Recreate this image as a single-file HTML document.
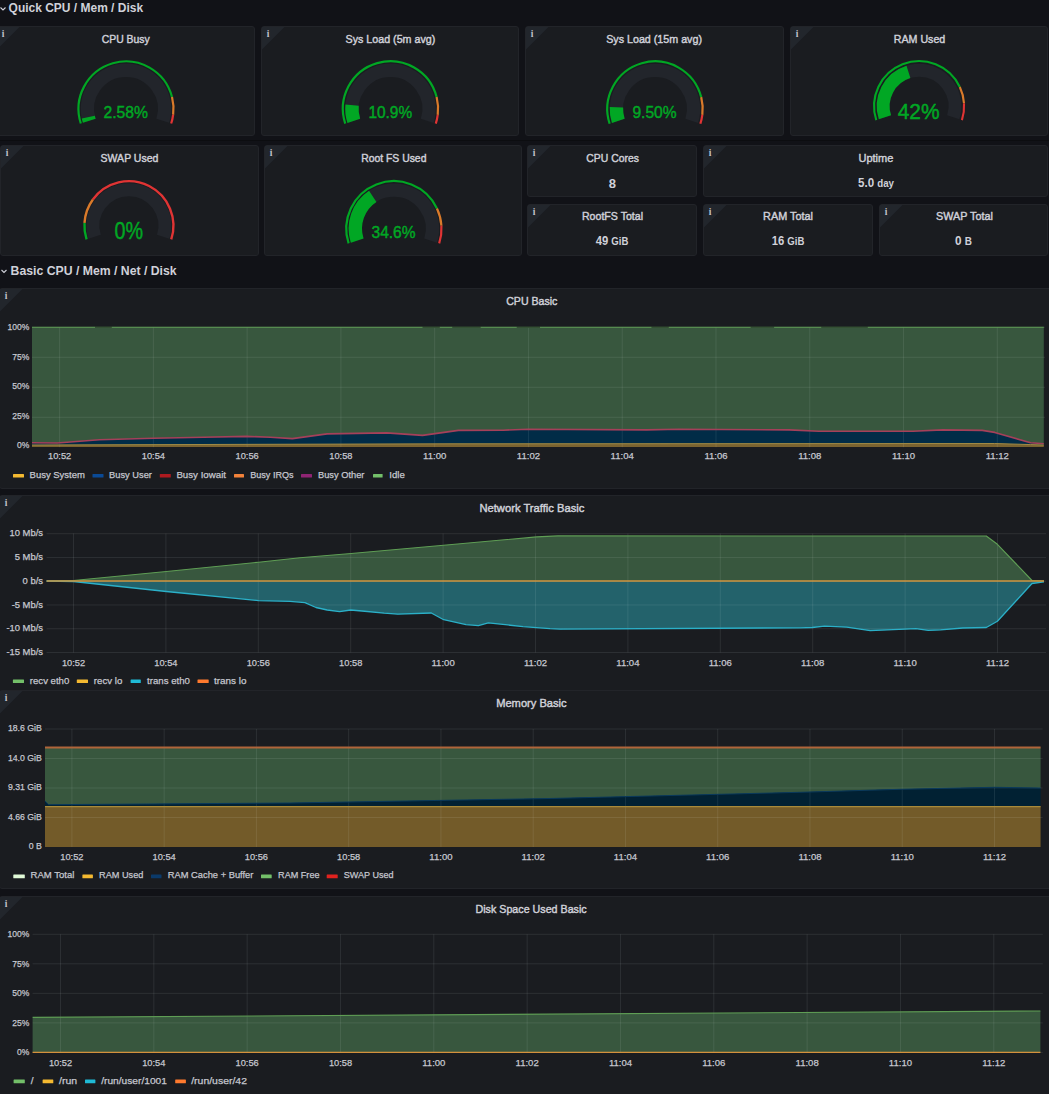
<!DOCTYPE html>
<html><head><meta charset="utf-8"><title>Grafana Node Exporter</title>
<style>html,body{margin:0;padding:0;background:#111217;width:1049px;height:1094px;overflow:hidden;font-family:"Liberation Sans",sans-serif;}svg{display:block}</style>
</head><body>
<svg width="1049" height="1094" viewBox="0 0 1049 1094"><rect x="0" y="0" width="1049" height="1094" fill="#111217"/>
<rect x="0" y="140" width="1049" height="1" fill="#0c0d10"/>
<path d="M0.5,7.5 L3,10 L5.5,7.5" stroke="#d0d1d9" stroke-width="1.1" fill="none"/>
<text x="8.6" y="11.7" font-family="Liberation Sans" font-size="12" fill="#d0d1d9" text-anchor="start" font-weight="bold" textLength="134.5" lengthAdjust="spacingAndGlyphs">Quick CPU / Mem / Disk</text>
<path d="M1.5,270 L4,272.5 L6.5,270" stroke="#d0d1d9" stroke-width="1.1" fill="none"/>
<text x="10.6" y="275" font-family="Liberation Sans" font-size="12" fill="#d0d1d9" text-anchor="start" font-weight="bold" textLength="166" lengthAdjust="spacingAndGlyphs">Basic CPU / Mem / Net / Disk</text>
<rect x="-3.5" y="26.5" width="258" height="109" rx="2.5" fill="#1a1c20" stroke="#222429" stroke-width="1"/>
<path d="M-3,27 L19.5,27 L-3,49.5 Z" fill="#22262c"/>
<text x="3" y="36.6" font-family="Liberation Serif" font-size="9.5" fill="#c2c3cc" text-anchor="middle" font-weight="bold">i</text>
<rect x="261.5" y="26.5" width="257" height="109" rx="2.5" fill="#1a1c20" stroke="#222429" stroke-width="1"/>
<path d="M262,27 L284.5,27 L262,49.5 Z" fill="#22262c"/>
<text x="268" y="36.6" font-family="Liberation Serif" font-size="9.5" fill="#c2c3cc" text-anchor="middle" font-weight="bold">i</text>
<rect x="525.5" y="26.5" width="258" height="109" rx="2.5" fill="#1a1c20" stroke="#222429" stroke-width="1"/>
<path d="M526,27 L548.5,27 L526,49.5 Z" fill="#22262c"/>
<text x="532" y="36.6" font-family="Liberation Serif" font-size="9.5" fill="#c2c3cc" text-anchor="middle" font-weight="bold">i</text>
<rect x="790.5" y="26.5" width="257" height="109" rx="2.5" fill="#1a1c20" stroke="#222429" stroke-width="1"/>
<path d="M791,27 L813.5,27 L791,49.5 Z" fill="#22262c"/>
<text x="797" y="36.6" font-family="Liberation Serif" font-size="9.5" fill="#c2c3cc" text-anchor="middle" font-weight="bold">i</text>
<text x="125.7" y="42.6" font-family="Liberation Sans" font-size="11" fill="#d0d1d9" text-anchor="middle" font-weight="normal" textLength="48" lengthAdjust="spacingAndGlyphs" stroke="#d0d1d9" stroke-width="0.42">CPU Busy</text>
<text x="390.4" y="42.8" font-family="Liberation Sans" font-size="11" fill="#d0d1d9" text-anchor="middle" font-weight="normal" textLength="89.7" lengthAdjust="spacingAndGlyphs" stroke="#d0d1d9" stroke-width="0.42">Sys Load (5m avg)</text>
<text x="654.1" y="42.8" font-family="Liberation Sans" font-size="11" fill="#d0d1d9" text-anchor="middle" font-weight="normal" textLength="95.8" lengthAdjust="spacingAndGlyphs" stroke="#d0d1d9" stroke-width="0.42">Sys Load (15m avg)</text>
<text x="919.5" y="42.6" font-family="Liberation Sans" font-size="11" fill="#d0d1d9" text-anchor="middle" font-weight="normal" textLength="51.5" lengthAdjust="spacingAndGlyphs" stroke="#d0d1d9" stroke-width="0.42">RAM Used</text>
<path d="M89.29,120.73 A38.6,38.6 0 1 1 162.71,120.73" stroke="#22252b" stroke-width="13.4" fill="none"/>
<path d="M89.29,120.73 A38.6,38.6 0 0 1 88.3,117.11" stroke="#01a724" stroke-width="13.4" fill="none"/>
<path d="M80.82,123.48 A47.5,47.5 0 1 1 172.01,96.99" stroke="#01a724" stroke-width="2.2" fill="none"/>
<path d="M172.01,96.99 A47.5,47.5 0 0 1 173.13,114.75" stroke="#d97a2a" stroke-width="2.2" fill="none"/>
<path d="M173.13,114.75 A47.5,47.5 0 0 1 171.18,123.48" stroke="#e03434" stroke-width="2.2" fill="none"/>
<text x="125.75" y="118.4" font-family="Liberation Sans" font-size="16" fill="#01a724" text-anchor="middle" font-weight="normal" textLength="44.5" lengthAdjust="spacingAndGlyphs" stroke="#01a724" stroke-width="0.45">2.58%</text>
<path d="M353.79,120.83 A38.6,38.6 0 1 1 427.21,120.83" stroke="#22252b" stroke-width="13.4" fill="none"/>
<path d="M353.79,120.83 A38.6,38.6 0 0 1 352.08,105.17" stroke="#01a724" stroke-width="13.4" fill="none"/>
<path d="M345.23,123.61 A47.6,47.6 0 1 1 436.6,97.06" stroke="#01a724" stroke-width="2.2" fill="none"/>
<path d="M436.6,97.06 A47.6,47.6 0 0 1 437.72,114.87" stroke="#d97a2a" stroke-width="2.2" fill="none"/>
<path d="M437.72,114.87 A47.6,47.6 0 0 1 435.77,123.61" stroke="#e03434" stroke-width="2.2" fill="none"/>
<text x="390.3" y="118.4" font-family="Liberation Sans" font-size="16.5" fill="#01a724" text-anchor="middle" font-weight="normal" textLength="43.8" lengthAdjust="spacingAndGlyphs" stroke="#01a724" stroke-width="0.45">10.9%</text>
<path d="M618.29,120.93 A38.6,38.6 0 1 1 691.71,120.93" stroke="#22252b" stroke-width="13.4" fill="none"/>
<path d="M618.29,120.93 A38.6,38.6 0 0 1 616.44,107.3" stroke="#01a724" stroke-width="13.4" fill="none"/>
<path d="M609.63,123.74 A47.7,47.7 0 1 1 701.2,97.14" stroke="#01a724" stroke-width="2.2" fill="none"/>
<path d="M701.2,97.14 A47.7,47.7 0 0 1 702.32,114.98" stroke="#d97a2a" stroke-width="2.2" fill="none"/>
<path d="M702.32,114.98 A47.7,47.7 0 0 1 700.37,123.74" stroke="#e03434" stroke-width="2.2" fill="none"/>
<text x="654.5" y="118.4" font-family="Liberation Sans" font-size="16.5" fill="#01a724" text-anchor="middle" font-weight="normal" textLength="44.2" lengthAdjust="spacingAndGlyphs" stroke="#01a724" stroke-width="0.45">9.50%</text>
<path d="M884.96,117.29 A35.9,35.9 0 1 1 953.24,117.29" stroke="#22252b" stroke-width="12.9" fill="none"/>
<path d="M884.96,117.29 A35.9,35.9 0 0 1 908.44,71.92" stroke="#01a724" stroke-width="12.9" fill="none"/>
<path d="M876.3,120.11 A45,45 0 0 1 959.82,87.04" stroke="#01a724" stroke-width="2.1" fill="none"/>
<path d="M959.82,87.04 A45,45 0 0 1 964.01,103.37" stroke="#d97a2a" stroke-width="2.1" fill="none"/>
<path d="M964.01,103.37 A45,45 0 0 1 961.9,120.11" stroke="#e03434" stroke-width="2.1" fill="none"/>
<text x="918.6" y="119.2" font-family="Liberation Sans" font-size="22.3" fill="#01a724" text-anchor="middle" font-weight="normal" textLength="41.8" lengthAdjust="spacingAndGlyphs" stroke="#01a724" stroke-width="0.45">42%</text>
<rect x="0.5" y="145.5" width="258" height="110" rx="2.5" fill="#1a1c20" stroke="#222429" stroke-width="1"/>
<path d="M1,146 L23.5,146 L1,168.5 Z" fill="#22262c"/>
<text x="7" y="155.6" font-family="Liberation Serif" font-size="9.5" fill="#c2c3cc" text-anchor="middle" font-weight="bold">i</text>
<rect x="264.5" y="145.5" width="257" height="110" rx="2.5" fill="#1a1c20" stroke="#222429" stroke-width="1"/>
<path d="M265,146 L287.5,146 L265,168.5 Z" fill="#22262c"/>
<text x="271" y="155.6" font-family="Liberation Serif" font-size="9.5" fill="#c2c3cc" text-anchor="middle" font-weight="bold">i</text>
<rect x="527.5" y="145.5" width="169" height="51" rx="2.5" fill="#1a1c20" stroke="#222429" stroke-width="1"/>
<path d="M528,146 L550.5,146 L528,168.5 Z" fill="#22262c"/>
<text x="534" y="155.6" font-family="Liberation Serif" font-size="9.5" fill="#c2c3cc" text-anchor="middle" font-weight="bold">i</text>
<rect x="703.5" y="145.5" width="344" height="51" rx="2.5" fill="#1a1c20" stroke="#222429" stroke-width="1"/>
<path d="M704,146 L726.5,146 L704,168.5 Z" fill="#22262c"/>
<text x="710" y="155.6" font-family="Liberation Serif" font-size="9.5" fill="#c2c3cc" text-anchor="middle" font-weight="bold">i</text>
<rect x="527.5" y="204.5" width="169" height="51" rx="2.5" fill="#1a1c20" stroke="#222429" stroke-width="1"/>
<path d="M528,205 L550.5,205 L528,227.5 Z" fill="#22262c"/>
<text x="534" y="214.6" font-family="Liberation Serif" font-size="9.5" fill="#c2c3cc" text-anchor="middle" font-weight="bold">i</text>
<rect x="703.5" y="204.5" width="169" height="51" rx="2.5" fill="#1a1c20" stroke="#222429" stroke-width="1"/>
<path d="M704,205 L726.5,205 L704,227.5 Z" fill="#22262c"/>
<text x="710" y="214.6" font-family="Liberation Serif" font-size="9.5" fill="#c2c3cc" text-anchor="middle" font-weight="bold">i</text>
<rect x="879.5" y="204.5" width="168" height="51" rx="2.5" fill="#1a1c20" stroke="#222429" stroke-width="1"/>
<path d="M880,205 L902.5,205 L880,227.5 Z" fill="#22262c"/>
<text x="886" y="214.6" font-family="Liberation Serif" font-size="9.5" fill="#c2c3cc" text-anchor="middle" font-weight="bold">i</text>
<text x="129.5" y="162.1" font-family="Liberation Sans" font-size="11" fill="#d0d1d9" text-anchor="middle" font-weight="normal" textLength="57.8" lengthAdjust="spacingAndGlyphs" stroke="#d0d1d9" stroke-width="0.42">SWAP Used</text>
<text x="393.8" y="162" font-family="Liberation Sans" font-size="11" fill="#d0d1d9" text-anchor="middle" font-weight="normal" textLength="65.3" lengthAdjust="spacingAndGlyphs" stroke="#d0d1d9" stroke-width="0.42">Root FS Used</text>
<path d="M94.66,236.82 A36,36 0 1 1 163.14,236.82" stroke="#22252b" stroke-width="13" fill="none"/>
<path d="M86.58,239.45 A44.5,44.5 0 0 1 84.49,222.91" stroke="#01a724" stroke-width="2.4" fill="none"/>
<path d="M84.49,222.91 A44.5,44.5 0 0 1 92.9,199.54" stroke="#d97a2a" stroke-width="2.4" fill="none"/>
<path d="M92.9,199.54 A44.5,44.5 0 0 1 171.22,239.45" stroke="#e03434" stroke-width="2.4" fill="none"/>
<text x="128.7" y="239" font-family="Liberation Sans" font-size="23" fill="#01a724" text-anchor="middle" font-weight="normal" textLength="28.5" lengthAdjust="spacingAndGlyphs" stroke="#01a724" stroke-width="0.45">0%</text>
<path d="M357.19,240.63 A38.6,38.6 0 1 1 430.61,240.63" stroke="#22252b" stroke-width="13.4" fill="none"/>
<path d="M357.19,240.63 A38.6,38.6 0 0 1 372.73,196.42" stroke="#01a724" stroke-width="13.4" fill="none"/>
<path d="M348.63,243.41 A47.6,47.6 0 0 1 436.97,208.43" stroke="#01a724" stroke-width="2.2" fill="none"/>
<path d="M436.97,208.43 A47.6,47.6 0 0 1 441.41,225.71" stroke="#d97a2a" stroke-width="2.2" fill="none"/>
<path d="M441.41,225.71 A47.6,47.6 0 0 1 439.17,243.41" stroke="#e03434" stroke-width="2.2" fill="none"/>
<text x="393.5" y="237.6" font-family="Liberation Sans" font-size="16" fill="#01a724" text-anchor="middle" font-weight="normal" textLength="44" lengthAdjust="spacingAndGlyphs" stroke="#01a724" stroke-width="0.45">34.6%</text>
<text x="612.6" y="162.2" font-family="Liberation Sans" font-size="11" fill="#d0d1d9" text-anchor="middle" font-weight="normal" textLength="52.5" lengthAdjust="spacingAndGlyphs" stroke="#d0d1d9" stroke-width="0.42">CPU Cores</text>
<text x="875.9" y="162.2" font-family="Liberation Sans" font-size="11" fill="#d0d1d9" text-anchor="middle" font-weight="normal" textLength="34.9" lengthAdjust="spacingAndGlyphs" stroke="#d0d1d9" stroke-width="0.42">Uptime</text>
<text x="612.3" y="187.9" font-family="Liberation Sans" font-size="13" fill="#d0d1d9" text-anchor="middle" font-weight="bold">8</text>
<text x="876" y="187.4" font-family="Liberation Sans" font-size="12.5" fill="#d0d1d9" text-anchor="middle" font-weight="bold" textLength="36" lengthAdjust="spacingAndGlyphs">5.0 <tspan font-size="10.5">day</tspan></text>
<text x="612.5" y="220.2" font-family="Liberation Sans" font-size="11" fill="#d0d1d9" text-anchor="middle" font-weight="normal" textLength="61.1" lengthAdjust="spacingAndGlyphs" stroke="#d0d1d9" stroke-width="0.42">RootFS Total</text>
<text x="788" y="220.3" font-family="Liberation Sans" font-size="11" fill="#d0d1d9" text-anchor="middle" font-weight="normal" textLength="49.9" lengthAdjust="spacingAndGlyphs" stroke="#d0d1d9" stroke-width="0.42">RAM Total</text>
<text x="964.4" y="220.3" font-family="Liberation Sans" font-size="11" fill="#d0d1d9" text-anchor="middle" font-weight="normal" textLength="56.8" lengthAdjust="spacingAndGlyphs" stroke="#d0d1d9" stroke-width="0.42">SWAP Total</text>
<text x="612" y="245.3" font-family="Liberation Sans" font-size="12" fill="#d0d1d9" text-anchor="middle" font-weight="bold" textLength="32.7" lengthAdjust="spacingAndGlyphs">49 <tspan font-size="10.2">GiB</tspan></text>
<text x="788" y="245.3" font-family="Liberation Sans" font-size="12" fill="#d0d1d9" text-anchor="middle" font-weight="bold" textLength="32.7" lengthAdjust="spacingAndGlyphs">16 <tspan font-size="10.2">GiB</tspan></text>
<text x="963.5" y="245.3" font-family="Liberation Sans" font-size="12" fill="#d0d1d9" text-anchor="middle" font-weight="bold" textLength="17" lengthAdjust="spacingAndGlyphs">0 <tspan font-size="10.2">B</tspan></text>
<rect x="-0.5" y="288.5" width="1060" height="200" rx="2.5" fill="#1a1c20" stroke="#222429" stroke-width="1"/>
<path d="M0,289 L22.5,289 L0,311.5 Z" fill="#22262c"/>
<text x="6" y="298.6" font-family="Liberation Serif" font-size="9.5" fill="#c2c3cc" text-anchor="middle" font-weight="bold">i</text>
<rect x="-0.5" y="495.5" width="1060" height="204" rx="2.5" fill="#1a1c20" stroke="#222429" stroke-width="1"/>
<path d="M0,496 L22.5,496 L0,518.5 Z" fill="#22262c"/>
<text x="6" y="505.6" font-family="Liberation Serif" font-size="9.5" fill="#c2c3cc" text-anchor="middle" font-weight="bold">i</text>
<rect x="-0.5" y="690.5" width="1060" height="198" rx="2.5" fill="#1a1c20" stroke="#222429" stroke-width="1"/>
<path d="M0,691 L22.5,691 L0,713.5 Z" fill="#22262c"/>
<text x="6" y="700.6" font-family="Liberation Serif" font-size="9.5" fill="#c2c3cc" text-anchor="middle" font-weight="bold">i</text>
<rect x="-0.5" y="896.5" width="1060" height="213" rx="2.5" fill="#1a1c20" stroke="#222429" stroke-width="1"/>
<path d="M0,897 L22.5,897 L0,919.5 Z" fill="#22262c"/>
<text x="6" y="906.6" font-family="Liberation Serif" font-size="9.5" fill="#c2c3cc" text-anchor="middle" font-weight="bold">i</text>
<text x="531.8" y="305.4" font-family="Liberation Sans" font-size="11" fill="#d0d1d9" text-anchor="middle" font-weight="normal" textLength="51.2" lengthAdjust="spacingAndGlyphs" stroke="#d0d1d9" stroke-width="0.42">CPU Basic</text>
<text x="531.9" y="511.7" font-family="Liberation Sans" font-size="11" fill="#d0d1d9" text-anchor="middle" font-weight="normal" textLength="104.9" lengthAdjust="spacingAndGlyphs" stroke="#d0d1d9" stroke-width="0.42">Network Traffic Basic</text>
<text x="531.4" y="707.3" font-family="Liberation Sans" font-size="11" fill="#d0d1d9" text-anchor="middle" font-weight="normal" textLength="70.4" lengthAdjust="spacingAndGlyphs" stroke="#d0d1d9" stroke-width="0.42">Memory Basic</text>
<text x="531.1" y="912.7" font-family="Liberation Sans" font-size="11" fill="#d0d1d9" text-anchor="middle" font-weight="normal" textLength="111.2" lengthAdjust="spacingAndGlyphs" stroke="#d0d1d9" stroke-width="0.42">Disk Space Used Basic</text>
<text x="29.3" y="330.2" font-family="Liberation Sans" font-size="9.9" fill="#c7c8d0" text-anchor="end" font-weight="normal" textLength="21.77" lengthAdjust="spacingAndGlyphs" stroke="#c7c8d0" stroke-width="0.25">100%</text>
<text x="29.3" y="359.7" font-family="Liberation Sans" font-size="9.9" fill="#c7c8d0" text-anchor="end" font-weight="normal" textLength="17.04" lengthAdjust="spacingAndGlyphs" stroke="#c7c8d0" stroke-width="0.25">75%</text>
<text x="29.3" y="389.2" font-family="Liberation Sans" font-size="9.9" fill="#c7c8d0" text-anchor="end" font-weight="normal" textLength="17.04" lengthAdjust="spacingAndGlyphs" stroke="#c7c8d0" stroke-width="0.25">50%</text>
<text x="29.3" y="418.8" font-family="Liberation Sans" font-size="9.9" fill="#c7c8d0" text-anchor="end" font-weight="normal" textLength="17.04" lengthAdjust="spacingAndGlyphs" stroke="#c7c8d0" stroke-width="0.25">25%</text>
<text x="29.3" y="448.1" font-family="Liberation Sans" font-size="9.9" fill="#c7c8d0" text-anchor="end" font-weight="normal" textLength="12.31" lengthAdjust="spacingAndGlyphs" stroke="#c7c8d0" stroke-width="0.25">0%</text>
<text x="59.6" y="459.2" font-family="Liberation Sans" font-size="9.9" fill="#c7c8d0" text-anchor="middle" font-weight="normal" textLength="23.2" lengthAdjust="spacingAndGlyphs" stroke="#c7c8d0" stroke-width="0.25">10:52</text>
<text x="153.37" y="459.2" font-family="Liberation Sans" font-size="9.9" fill="#c7c8d0" text-anchor="middle" font-weight="normal" textLength="23.2" lengthAdjust="spacingAndGlyphs" stroke="#c7c8d0" stroke-width="0.25">10:54</text>
<text x="247.14" y="459.2" font-family="Liberation Sans" font-size="9.9" fill="#c7c8d0" text-anchor="middle" font-weight="normal" textLength="23.2" lengthAdjust="spacingAndGlyphs" stroke="#c7c8d0" stroke-width="0.25">10:56</text>
<text x="340.91" y="459.2" font-family="Liberation Sans" font-size="9.9" fill="#c7c8d0" text-anchor="middle" font-weight="normal" textLength="23.2" lengthAdjust="spacingAndGlyphs" stroke="#c7c8d0" stroke-width="0.25">10:58</text>
<text x="434.68" y="459.2" font-family="Liberation Sans" font-size="9.9" fill="#c7c8d0" text-anchor="middle" font-weight="normal" textLength="23.2" lengthAdjust="spacingAndGlyphs" stroke="#c7c8d0" stroke-width="0.25">11:00</text>
<text x="528.45" y="459.2" font-family="Liberation Sans" font-size="9.9" fill="#c7c8d0" text-anchor="middle" font-weight="normal" textLength="23.2" lengthAdjust="spacingAndGlyphs" stroke="#c7c8d0" stroke-width="0.25">11:02</text>
<text x="622.22" y="459.2" font-family="Liberation Sans" font-size="9.9" fill="#c7c8d0" text-anchor="middle" font-weight="normal" textLength="23.2" lengthAdjust="spacingAndGlyphs" stroke="#c7c8d0" stroke-width="0.25">11:04</text>
<text x="715.99" y="459.2" font-family="Liberation Sans" font-size="9.9" fill="#c7c8d0" text-anchor="middle" font-weight="normal" textLength="23.2" lengthAdjust="spacingAndGlyphs" stroke="#c7c8d0" stroke-width="0.25">11:06</text>
<text x="809.76" y="459.2" font-family="Liberation Sans" font-size="9.9" fill="#c7c8d0" text-anchor="middle" font-weight="normal" textLength="23.2" lengthAdjust="spacingAndGlyphs" stroke="#c7c8d0" stroke-width="0.25">11:08</text>
<text x="903.53" y="459.2" font-family="Liberation Sans" font-size="9.9" fill="#c7c8d0" text-anchor="middle" font-weight="normal" textLength="23.2" lengthAdjust="spacingAndGlyphs" stroke="#c7c8d0" stroke-width="0.25">11:10</text>
<text x="997.3" y="459.2" font-family="Liberation Sans" font-size="9.9" fill="#c7c8d0" text-anchor="middle" font-weight="normal" textLength="23.2" lengthAdjust="spacingAndGlyphs" stroke="#c7c8d0" stroke-width="0.25">11:12</text>
<polygon points="32,327.3 1043.8,327.3 1043.8,443.8 1030.6,442.8 994.7,432.4 982.3,430.4 942.7,429.9 912.9,431.2 818.7,431.2 789,429.9 678.7,429.2 646.5,429.9 527.8,429.2 503,430.2 458.4,430.4 422.5,435.4 386.6,432.9 327.1,433.9 292.4,438.6 270.4,437.3 246.9,436.4 203.5,437.3 153.9,438.3 99.4,439.8 57.3,443 32,442.8" fill="#38573e" fill-opacity="1"/>
<polygon points="32,442.8 57.3,443 99.4,439.8 153.9,438.3 203.5,437.3 246.9,436.4 270.4,437.3 292.4,438.6 327.1,433.9 386.6,432.9 422.5,435.4 458.4,430.4 503,430.2 527.8,429.2 646.5,429.9 678.7,429.2 789,429.9 818.7,431.2 912.9,431.2 942.7,429.9 982.3,430.4 994.7,432.4 1030.6,442.8 1043.8,443.8 1043.8,445 1030.6,444.6 994.7,443.5 450,443.8 200,444.5 32,445" fill="#012c47" fill-opacity="1"/>
<polygon points="32,445 200,444.5 450,443.8 994.7,443.5 1030.6,444.6 1043.8,445 1043.8,447 32,447" fill="#7a6330" fill-opacity="1"/>
<line x1="32" y1="327.3" x2="1045" y2="327.3" stroke="rgba(240,250,255,0.085)" stroke-width="1"/>
<line x1="32" y1="357.3" x2="1045" y2="357.3" stroke="rgba(240,250,255,0.085)" stroke-width="1"/>
<line x1="32" y1="387.3" x2="1045" y2="387.3" stroke="rgba(240,250,255,0.085)" stroke-width="1"/>
<line x1="32" y1="417.3" x2="1045" y2="417.3" stroke="rgba(240,250,255,0.085)" stroke-width="1"/>
<line x1="59.6" y1="327" x2="59.6" y2="447.3" stroke="rgba(240,250,255,0.085)" stroke-width="1"/>
<line x1="153.37" y1="327" x2="153.37" y2="447.3" stroke="rgba(240,250,255,0.085)" stroke-width="1"/>
<line x1="247.14" y1="327" x2="247.14" y2="447.3" stroke="rgba(240,250,255,0.085)" stroke-width="1"/>
<line x1="340.91" y1="327" x2="340.91" y2="447.3" stroke="rgba(240,250,255,0.085)" stroke-width="1"/>
<line x1="434.68" y1="327" x2="434.68" y2="447.3" stroke="rgba(240,250,255,0.085)" stroke-width="1"/>
<line x1="528.45" y1="327" x2="528.45" y2="447.3" stroke="rgba(240,250,255,0.085)" stroke-width="1"/>
<line x1="622.22" y1="327" x2="622.22" y2="447.3" stroke="rgba(240,250,255,0.085)" stroke-width="1"/>
<line x1="715.99" y1="327" x2="715.99" y2="447.3" stroke="rgba(240,250,255,0.085)" stroke-width="1"/>
<line x1="809.76" y1="327" x2="809.76" y2="447.3" stroke="rgba(240,250,255,0.085)" stroke-width="1"/>
<line x1="903.53" y1="327" x2="903.53" y2="447.3" stroke="rgba(240,250,255,0.085)" stroke-width="1"/>
<line x1="997.3" y1="327" x2="997.3" y2="447.3" stroke="rgba(240,250,255,0.085)" stroke-width="1"/>
<polyline points="32,327.3 1043.8,327.3" fill="none" stroke="#5f9e55" stroke-width="1.1" stroke-linejoin="round"/>
<rect x="95" y="326.5" width="16.8" height="1.1" fill="#1f2a22"/>
<rect x="422.5" y="326.5" width="17.3" height="1.1" fill="#1f2a22"/>
<rect x="452.2" y="326.5" width="28.5" height="1.1" fill="#1f2a22"/>
<rect x="516.7" y="326.5" width="23.3" height="1.1" fill="#1f2a22"/>
<rect x="651.4" y="326.5" width="17.4" height="1.1" fill="#1f2a22"/>
<rect x="750.6" y="326.5" width="23.5" height="1.1" fill="#1f2a22"/>
<rect x="821.2" y="326.5" width="46.6" height="1.1" fill="#1f2a22"/>
<polyline points="32,442.8 57.3,443 99.4,439.8 153.9,438.3 203.5,437.3 246.9,436.4 270.4,437.3 292.4,438.6 327.1,433.9 386.6,432.9 422.5,435.4 458.4,430.4 503,430.2 527.8,429.2 646.5,429.9 678.7,429.2 789,429.9 818.7,431.2 912.9,431.2 942.7,429.9 982.3,430.4 994.7,432.4 1030.6,442.8 1043.8,443.8" fill="none" stroke="#a5405a" stroke-width="1.6" stroke-linejoin="round"/>
<polyline points="32,445 200,444.5 450,443.8 994.7,443.5 1030.6,444.6 1043.8,445" fill="none" stroke="#a08a45" stroke-width="1" stroke-linejoin="round"/>
<rect x="13" y="473.9" width="11" height="3.6" rx="0.5" fill="#f4b931"/>
<text x="29.6" y="477.6" font-family="Liberation Sans" font-size="9.9" fill="#c7c8d0" text-anchor="start" font-weight="normal" textLength="55.3" lengthAdjust="spacingAndGlyphs" stroke="#c7c8d0" stroke-width="0.25">Busy System</text>
<rect x="92.5" y="473.9" width="11" height="3.6" rx="0.5" fill="#0a4a96"/>
<text x="109.1" y="477.6" font-family="Liberation Sans" font-size="9.9" fill="#c7c8d0" text-anchor="start" font-weight="normal" textLength="42.8" lengthAdjust="spacingAndGlyphs" stroke="#c7c8d0" stroke-width="0.25">Busy User</text>
<rect x="159.8" y="473.9" width="11" height="3.6" rx="0.5" fill="#ad1a1f"/>
<text x="176.4" y="477.6" font-family="Liberation Sans" font-size="9.9" fill="#c7c8d0" text-anchor="start" font-weight="normal" textLength="49.6" lengthAdjust="spacingAndGlyphs" stroke="#c7c8d0" stroke-width="0.25">Busy Iowait</text>
<rect x="234" y="473.9" width="10" height="3.6" rx="0.5" fill="#f2823a"/>
<text x="250.2" y="477.6" font-family="Liberation Sans" font-size="9.9" fill="#c7c8d0" text-anchor="start" font-weight="normal" textLength="43.4" lengthAdjust="spacingAndGlyphs" stroke="#c7c8d0" stroke-width="0.25">Busy IRQs</text>
<rect x="301" y="473.9" width="11" height="3.6" rx="0.5" fill="#8f2473"/>
<text x="318" y="477.6" font-family="Liberation Sans" font-size="9.9" fill="#c7c8d0" text-anchor="start" font-weight="normal" textLength="46.4" lengthAdjust="spacingAndGlyphs" stroke="#c7c8d0" stroke-width="0.25">Busy Other</text>
<rect x="373" y="473.9" width="9.6" height="3.6" rx="0.5" fill="#73bf69"/>
<text x="389.2" y="477.6" font-family="Liberation Sans" font-size="9.9" fill="#c7c8d0" text-anchor="start" font-weight="normal" textLength="15.6" lengthAdjust="spacingAndGlyphs" stroke="#c7c8d0" stroke-width="0.25">Idle</text>
<text x="43" y="536.3" font-family="Liberation Sans" font-size="9.9" fill="#c7c8d0" text-anchor="end" font-weight="normal" textLength="33.45" lengthAdjust="spacingAndGlyphs" stroke="#c7c8d0" stroke-width="0.25">10 Mb/s</text>
<text x="43" y="560.06" font-family="Liberation Sans" font-size="9.9" fill="#c7c8d0" text-anchor="end" font-weight="normal" textLength="28.22" lengthAdjust="spacingAndGlyphs" stroke="#c7c8d0" stroke-width="0.25">5 Mb/s</text>
<text x="43" y="583.82" font-family="Liberation Sans" font-size="9.9" fill="#c7c8d0" text-anchor="end" font-weight="normal" textLength="20.39" lengthAdjust="spacingAndGlyphs" stroke="#c7c8d0" stroke-width="0.25">0 b/s</text>
<text x="43" y="607.58" font-family="Liberation Sans" font-size="9.9" fill="#c7c8d0" text-anchor="end" font-weight="normal" textLength="31.35" lengthAdjust="spacingAndGlyphs" stroke="#c7c8d0" stroke-width="0.25">-5 Mb/s</text>
<text x="43" y="631.34" font-family="Liberation Sans" font-size="9.9" fill="#c7c8d0" text-anchor="end" font-weight="normal" textLength="36.58" lengthAdjust="spacingAndGlyphs" stroke="#c7c8d0" stroke-width="0.25">-10 Mb/s</text>
<text x="43" y="655.1" font-family="Liberation Sans" font-size="9.9" fill="#c7c8d0" text-anchor="end" font-weight="normal" textLength="36.58" lengthAdjust="spacingAndGlyphs" stroke="#c7c8d0" stroke-width="0.25">-15 Mb/s</text>
<text x="73.5" y="665.8" font-family="Liberation Sans" font-size="9.9" fill="#c7c8d0" text-anchor="middle" font-weight="normal" textLength="23.2" lengthAdjust="spacingAndGlyphs" stroke="#c7c8d0" stroke-width="0.25">10:52</text>
<text x="165.9" y="665.8" font-family="Liberation Sans" font-size="9.9" fill="#c7c8d0" text-anchor="middle" font-weight="normal" textLength="23.2" lengthAdjust="spacingAndGlyphs" stroke="#c7c8d0" stroke-width="0.25">10:54</text>
<text x="258.3" y="665.8" font-family="Liberation Sans" font-size="9.9" fill="#c7c8d0" text-anchor="middle" font-weight="normal" textLength="23.2" lengthAdjust="spacingAndGlyphs" stroke="#c7c8d0" stroke-width="0.25">10:56</text>
<text x="350.7" y="665.8" font-family="Liberation Sans" font-size="9.9" fill="#c7c8d0" text-anchor="middle" font-weight="normal" textLength="23.2" lengthAdjust="spacingAndGlyphs" stroke="#c7c8d0" stroke-width="0.25">10:58</text>
<text x="443.1" y="665.8" font-family="Liberation Sans" font-size="9.9" fill="#c7c8d0" text-anchor="middle" font-weight="normal" textLength="23.2" lengthAdjust="spacingAndGlyphs" stroke="#c7c8d0" stroke-width="0.25">11:00</text>
<text x="535.5" y="665.8" font-family="Liberation Sans" font-size="9.9" fill="#c7c8d0" text-anchor="middle" font-weight="normal" textLength="23.2" lengthAdjust="spacingAndGlyphs" stroke="#c7c8d0" stroke-width="0.25">11:02</text>
<text x="627.9" y="665.8" font-family="Liberation Sans" font-size="9.9" fill="#c7c8d0" text-anchor="middle" font-weight="normal" textLength="23.2" lengthAdjust="spacingAndGlyphs" stroke="#c7c8d0" stroke-width="0.25">11:04</text>
<text x="720.3" y="665.8" font-family="Liberation Sans" font-size="9.9" fill="#c7c8d0" text-anchor="middle" font-weight="normal" textLength="23.2" lengthAdjust="spacingAndGlyphs" stroke="#c7c8d0" stroke-width="0.25">11:06</text>
<text x="812.7" y="665.8" font-family="Liberation Sans" font-size="9.9" fill="#c7c8d0" text-anchor="middle" font-weight="normal" textLength="23.2" lengthAdjust="spacingAndGlyphs" stroke="#c7c8d0" stroke-width="0.25">11:08</text>
<text x="905.1" y="665.8" font-family="Liberation Sans" font-size="9.9" fill="#c7c8d0" text-anchor="middle" font-weight="normal" textLength="23.2" lengthAdjust="spacingAndGlyphs" stroke="#c7c8d0" stroke-width="0.25">11:10</text>
<text x="997.5" y="665.8" font-family="Liberation Sans" font-size="9.9" fill="#c7c8d0" text-anchor="middle" font-weight="normal" textLength="23.2" lengthAdjust="spacingAndGlyphs" stroke="#c7c8d0" stroke-width="0.25">11:12</text>
<polygon points="46.6,581 73.5,580.5 166.4,571.5 258.6,562.2 300,557.7 351.2,553.5 443.7,545.3 536.6,536.9 558,535.9 986.3,536 997.4,544.3 1032,580.5 1044,581 1044,581 46.6,581" fill="#38573e" fill-opacity="1"/>
<polygon points="46.6,581 1044,581 1044,581.8 1032,583.5 997.4,621.3 986.3,627.5 962.8,628 940.6,629.9 928.3,630.4 915.9,628.7 904.8,629.2 870.2,630.7 846.8,627.2 824.6,626.2 812.2,627.5 800,627.8 560,629.1 550,628.6 523,626.6 488.3,622.9 478.4,625.6 466,624.6 443.7,619.7 431.3,613 397.8,614.2 384.2,613.2 361.9,611 350.7,610 339.6,611.7 327.2,610 316,607.5 304.9,602.6 290,601.3 258.6,600.6 166.4,591.5 73.5,581.5 46.6,581" fill="#23626b" fill-opacity="1"/>
<line x1="46.6" y1="533.7" x2="1046" y2="533.7" stroke="rgba(240,250,255,0.085)" stroke-width="1"/>
<line x1="46.6" y1="557.46" x2="1046" y2="557.46" stroke="rgba(240,250,255,0.085)" stroke-width="1"/>
<line x1="46.6" y1="581.22" x2="1046" y2="581.22" stroke="rgba(240,250,255,0.085)" stroke-width="1"/>
<line x1="46.6" y1="604.98" x2="1046" y2="604.98" stroke="rgba(240,250,255,0.085)" stroke-width="1"/>
<line x1="46.6" y1="628.74" x2="1046" y2="628.74" stroke="rgba(240,250,255,0.085)" stroke-width="1"/>
<line x1="46.6" y1="652.5" x2="1046" y2="652.5" stroke="rgba(240,250,255,0.085)" stroke-width="1"/>
<line x1="73.5" y1="533.5" x2="73.5" y2="652.5" stroke="rgba(240,250,255,0.085)" stroke-width="1"/>
<line x1="165.9" y1="533.5" x2="165.9" y2="652.5" stroke="rgba(240,250,255,0.085)" stroke-width="1"/>
<line x1="258.3" y1="533.5" x2="258.3" y2="652.5" stroke="rgba(240,250,255,0.085)" stroke-width="1"/>
<line x1="350.7" y1="533.5" x2="350.7" y2="652.5" stroke="rgba(240,250,255,0.085)" stroke-width="1"/>
<line x1="443.1" y1="533.5" x2="443.1" y2="652.5" stroke="rgba(240,250,255,0.085)" stroke-width="1"/>
<line x1="535.5" y1="533.5" x2="535.5" y2="652.5" stroke="rgba(240,250,255,0.085)" stroke-width="1"/>
<line x1="627.9" y1="533.5" x2="627.9" y2="652.5" stroke="rgba(240,250,255,0.085)" stroke-width="1"/>
<line x1="720.3" y1="533.5" x2="720.3" y2="652.5" stroke="rgba(240,250,255,0.085)" stroke-width="1"/>
<line x1="812.7" y1="533.5" x2="812.7" y2="652.5" stroke="rgba(240,250,255,0.085)" stroke-width="1"/>
<line x1="905.1" y1="533.5" x2="905.1" y2="652.5" stroke="rgba(240,250,255,0.085)" stroke-width="1"/>
<line x1="997.5" y1="533.5" x2="997.5" y2="652.5" stroke="rgba(240,250,255,0.085)" stroke-width="1"/>
<polyline points="46.6,581 73.5,580.5 166.4,571.5 258.6,562.2 300,557.7 351.2,553.5 443.7,545.3 536.6,536.9 558,535.9 986.3,536 997.4,544.3 1032,580.5 1044,581" fill="none" stroke="#5f9e55" stroke-width="1.1" stroke-linejoin="round"/>
<polyline points="46.6,581 73.5,581.5 166.4,591.5 258.6,600.6 290,601.3 304.9,602.6 316,607.5 327.2,610 339.6,611.7 350.7,610 361.9,611 384.2,613.2 397.8,614.2 431.3,613 443.7,619.7 466,624.6 478.4,625.6 488.3,622.9 523,626.6 550,628.6 560,629.1 800,627.8 812.2,627.5 824.6,626.2 846.8,627.2 870.2,630.7 904.8,629.2 915.9,628.7 928.3,630.4 940.6,629.9 962.8,628 986.3,627.5 997.4,621.3 1032,583.5 1044,581.8" fill="none" stroke="#2bb0c8" stroke-width="1.3" stroke-linejoin="round"/>
<polyline points="46.6,581 1044,581" fill="none" stroke="#cf943f" stroke-width="1.6" stroke-linejoin="round"/>
<rect x="12.9" y="679.4" width="11.1" height="3.6" rx="0.5" fill="#73bf69"/>
<text x="29.8" y="684.1" font-family="Liberation Sans" font-size="9.9" fill="#c7c8d0" text-anchor="start" font-weight="normal" textLength="39.5" lengthAdjust="spacingAndGlyphs" stroke="#c7c8d0" stroke-width="0.25">recv eth0</text>
<rect x="76.8" y="679.4" width="11.2" height="3.6" rx="0.5" fill="#f4b931"/>
<text x="93.8" y="684.1" font-family="Liberation Sans" font-size="9.9" fill="#c7c8d0" text-anchor="start" font-weight="normal" textLength="28.5" lengthAdjust="spacingAndGlyphs" stroke="#c7c8d0" stroke-width="0.25">recv lo</text>
<rect x="130.6" y="679.4" width="10.2" height="3.6" rx="0.5" fill="#1fbad6"/>
<text x="147.1" y="684.1" font-family="Liberation Sans" font-size="9.9" fill="#c7c8d0" text-anchor="start" font-weight="normal" textLength="42.9" lengthAdjust="spacingAndGlyphs" stroke="#c7c8d0" stroke-width="0.25">trans eth0</text>
<rect x="197.5" y="679.4" width="11.2" height="3.6" rx="0.5" fill="#ff7a2e"/>
<text x="214" y="684.1" font-family="Liberation Sans" font-size="9.9" fill="#c7c8d0" text-anchor="start" font-weight="normal" textLength="32.5" lengthAdjust="spacingAndGlyphs" stroke="#c7c8d0" stroke-width="0.25">trans lo</text>
<text x="41.8" y="731.2" font-family="Liberation Sans" font-size="9.9" fill="#c7c8d0" text-anchor="end" font-weight="normal" textLength="33.9" lengthAdjust="spacingAndGlyphs" stroke="#c7c8d0" stroke-width="0.25">18.6 GiB</text>
<text x="41.8" y="760.7" font-family="Liberation Sans" font-size="9.9" fill="#c7c8d0" text-anchor="end" font-weight="normal" textLength="33.9" lengthAdjust="spacingAndGlyphs" stroke="#c7c8d0" stroke-width="0.25">14.0 GiB</text>
<text x="41.8" y="790.2" font-family="Liberation Sans" font-size="9.9" fill="#c7c8d0" text-anchor="end" font-weight="normal" textLength="33.9" lengthAdjust="spacingAndGlyphs" stroke="#c7c8d0" stroke-width="0.25">9.31 GiB</text>
<text x="41.8" y="819.7" font-family="Liberation Sans" font-size="9.9" fill="#c7c8d0" text-anchor="end" font-weight="normal" textLength="33.9" lengthAdjust="spacingAndGlyphs" stroke="#c7c8d0" stroke-width="0.25">4.66 GiB</text>
<text x="41.8" y="849.2" font-family="Liberation Sans" font-size="9.9" fill="#c7c8d0" text-anchor="end" font-weight="normal" textLength="13.08" lengthAdjust="spacingAndGlyphs" stroke="#c7c8d0" stroke-width="0.25">0 B</text>
<text x="71.9" y="860" font-family="Liberation Sans" font-size="9.9" fill="#c7c8d0" text-anchor="middle" font-weight="normal" textLength="23.2" lengthAdjust="spacingAndGlyphs" stroke="#c7c8d0" stroke-width="0.25">10:52</text>
<text x="164.16" y="860" font-family="Liberation Sans" font-size="9.9" fill="#c7c8d0" text-anchor="middle" font-weight="normal" textLength="23.2" lengthAdjust="spacingAndGlyphs" stroke="#c7c8d0" stroke-width="0.25">10:54</text>
<text x="256.42" y="860" font-family="Liberation Sans" font-size="9.9" fill="#c7c8d0" text-anchor="middle" font-weight="normal" textLength="23.2" lengthAdjust="spacingAndGlyphs" stroke="#c7c8d0" stroke-width="0.25">10:56</text>
<text x="348.68" y="860" font-family="Liberation Sans" font-size="9.9" fill="#c7c8d0" text-anchor="middle" font-weight="normal" textLength="23.2" lengthAdjust="spacingAndGlyphs" stroke="#c7c8d0" stroke-width="0.25">10:58</text>
<text x="440.94" y="860" font-family="Liberation Sans" font-size="9.9" fill="#c7c8d0" text-anchor="middle" font-weight="normal" textLength="23.2" lengthAdjust="spacingAndGlyphs" stroke="#c7c8d0" stroke-width="0.25">11:00</text>
<text x="533.2" y="860" font-family="Liberation Sans" font-size="9.9" fill="#c7c8d0" text-anchor="middle" font-weight="normal" textLength="23.2" lengthAdjust="spacingAndGlyphs" stroke="#c7c8d0" stroke-width="0.25">11:02</text>
<text x="625.46" y="860" font-family="Liberation Sans" font-size="9.9" fill="#c7c8d0" text-anchor="middle" font-weight="normal" textLength="23.2" lengthAdjust="spacingAndGlyphs" stroke="#c7c8d0" stroke-width="0.25">11:04</text>
<text x="717.72" y="860" font-family="Liberation Sans" font-size="9.9" fill="#c7c8d0" text-anchor="middle" font-weight="normal" textLength="23.2" lengthAdjust="spacingAndGlyphs" stroke="#c7c8d0" stroke-width="0.25">11:06</text>
<text x="809.98" y="860" font-family="Liberation Sans" font-size="9.9" fill="#c7c8d0" text-anchor="middle" font-weight="normal" textLength="23.2" lengthAdjust="spacingAndGlyphs" stroke="#c7c8d0" stroke-width="0.25">11:08</text>
<text x="902.24" y="860" font-family="Liberation Sans" font-size="9.9" fill="#c7c8d0" text-anchor="middle" font-weight="normal" textLength="23.2" lengthAdjust="spacingAndGlyphs" stroke="#c7c8d0" stroke-width="0.25">11:10</text>
<text x="994.5" y="860" font-family="Liberation Sans" font-size="9.9" fill="#c7c8d0" text-anchor="middle" font-weight="normal" textLength="23.2" lengthAdjust="spacingAndGlyphs" stroke="#c7c8d0" stroke-width="0.25">11:12</text>
<polygon points="45,747.6 1040.6,747.6 1040.6,788 994.5,787.3 900,789.3 800,792.3 550,798.5 290,803 48.5,804.7 45,801" fill="#38573e" fill-opacity="1"/>
<polygon points="45,801 48.5,804.7 290,803 550,798.5 800,792.3 900,789.3 994.5,787.3 1040.6,788 1040.6,806.6 45,806.6" fill="#012133" fill-opacity="1"/>
<polygon points="45,806.6 1040.6,806.6 1040.6,847 45,847" fill="#735b29" fill-opacity="1"/>
<line x1="45" y1="729" x2="1042.6" y2="729" stroke="rgba(240,250,255,0.085)" stroke-width="1"/>
<line x1="45" y1="758.5" x2="1042.6" y2="758.5" stroke="rgba(240,250,255,0.085)" stroke-width="1"/>
<line x1="45" y1="788" x2="1042.6" y2="788" stroke="rgba(240,250,255,0.085)" stroke-width="1"/>
<line x1="45" y1="817.5" x2="1042.6" y2="817.5" stroke="rgba(240,250,255,0.085)" stroke-width="1"/>
<line x1="71.9" y1="729" x2="71.9" y2="847" stroke="rgba(240,250,255,0.085)" stroke-width="1"/>
<line x1="164.16" y1="729" x2="164.16" y2="847" stroke="rgba(240,250,255,0.085)" stroke-width="1"/>
<line x1="256.42" y1="729" x2="256.42" y2="847" stroke="rgba(240,250,255,0.085)" stroke-width="1"/>
<line x1="348.68" y1="729" x2="348.68" y2="847" stroke="rgba(240,250,255,0.085)" stroke-width="1"/>
<line x1="440.94" y1="729" x2="440.94" y2="847" stroke="rgba(240,250,255,0.085)" stroke-width="1"/>
<line x1="533.2" y1="729" x2="533.2" y2="847" stroke="rgba(240,250,255,0.085)" stroke-width="1"/>
<line x1="625.46" y1="729" x2="625.46" y2="847" stroke="rgba(240,250,255,0.085)" stroke-width="1"/>
<line x1="717.72" y1="729" x2="717.72" y2="847" stroke="rgba(240,250,255,0.085)" stroke-width="1"/>
<line x1="809.98" y1="729" x2="809.98" y2="847" stroke="rgba(240,250,255,0.085)" stroke-width="1"/>
<line x1="902.24" y1="729" x2="902.24" y2="847" stroke="rgba(240,250,255,0.085)" stroke-width="1"/>
<line x1="994.5" y1="729" x2="994.5" y2="847" stroke="rgba(240,250,255,0.085)" stroke-width="1"/>
<polyline points="45,801 48.5,804.7 290,803 550,798.5 800,792.3 900,789.3 994.5,787.3 1040.6,788" fill="none" stroke="#0a3a5c" stroke-width="1" stroke-linejoin="round"/>
<polyline points="45,806.6 1040.6,806.6" fill="none" stroke="#a88a3a" stroke-width="1.1" stroke-linejoin="round"/>
<polyline points="45,747.6 1040.6,747.6" fill="none" stroke="#b0653a" stroke-width="2" stroke-linejoin="round"/>
<rect x="13.3" y="874.6" width="11.5" height="3.6" rx="0.5" fill="#e0f9d7"/>
<text x="30.5" y="878.3" font-family="Liberation Sans" font-size="9.9" fill="#c7c8d0" text-anchor="start" font-weight="normal" textLength="43.9" lengthAdjust="spacingAndGlyphs" stroke="#c7c8d0" stroke-width="0.25">RAM Total</text>
<rect x="82.4" y="874.6" width="10.5" height="3.6" rx="0.5" fill="#f4b931"/>
<text x="99.1" y="878.3" font-family="Liberation Sans" font-size="9.9" fill="#c7c8d0" text-anchor="start" font-weight="normal" textLength="44.3" lengthAdjust="spacingAndGlyphs" stroke="#c7c8d0" stroke-width="0.25">RAM Used</text>
<rect x="151" y="874.6" width="10.5" height="3.6" rx="0.5" fill="#0b3a6a"/>
<text x="167.8" y="878.3" font-family="Liberation Sans" font-size="9.9" fill="#c7c8d0" text-anchor="start" font-weight="normal" textLength="85.6" lengthAdjust="spacingAndGlyphs" stroke="#c7c8d0" stroke-width="0.25">RAM Cache + Buffer</text>
<rect x="261" y="874.6" width="10.7" height="3.6" rx="0.5" fill="#73bf69"/>
<text x="278.1" y="878.3" font-family="Liberation Sans" font-size="9.9" fill="#c7c8d0" text-anchor="start" font-weight="normal" textLength="41.4" lengthAdjust="spacingAndGlyphs" stroke="#c7c8d0" stroke-width="0.25">RAM Free</text>
<rect x="326.7" y="874.6" width="11" height="3.6" rx="0.5" fill="#e0221e"/>
<text x="343.8" y="878.3" font-family="Liberation Sans" font-size="9.9" fill="#c7c8d0" text-anchor="start" font-weight="normal" textLength="49.8" lengthAdjust="spacingAndGlyphs" stroke="#c7c8d0" stroke-width="0.25">SWAP Used</text>
<text x="29.3" y="937.1" font-family="Liberation Sans" font-size="9.9" fill="#c7c8d0" text-anchor="end" font-weight="normal" textLength="21.77" lengthAdjust="spacingAndGlyphs" stroke="#c7c8d0" stroke-width="0.25">100%</text>
<text x="29.3" y="966.62" font-family="Liberation Sans" font-size="9.9" fill="#c7c8d0" text-anchor="end" font-weight="normal" textLength="17.04" lengthAdjust="spacingAndGlyphs" stroke="#c7c8d0" stroke-width="0.25">75%</text>
<text x="29.3" y="996.15" font-family="Liberation Sans" font-size="9.9" fill="#c7c8d0" text-anchor="end" font-weight="normal" textLength="17.04" lengthAdjust="spacingAndGlyphs" stroke="#c7c8d0" stroke-width="0.25">50%</text>
<text x="29.3" y="1025.67" font-family="Liberation Sans" font-size="9.9" fill="#c7c8d0" text-anchor="end" font-weight="normal" textLength="17.04" lengthAdjust="spacingAndGlyphs" stroke="#c7c8d0" stroke-width="0.25">25%</text>
<text x="29.3" y="1055.2" font-family="Liberation Sans" font-size="9.9" fill="#c7c8d0" text-anchor="end" font-weight="normal" textLength="12.31" lengthAdjust="spacingAndGlyphs" stroke="#c7c8d0" stroke-width="0.25">0%</text>
<text x="60.5" y="1066" font-family="Liberation Sans" font-size="9.9" fill="#c7c8d0" text-anchor="middle" font-weight="normal" textLength="23.2" lengthAdjust="spacingAndGlyphs" stroke="#c7c8d0" stroke-width="0.25">10:52</text>
<text x="153.83" y="1066" font-family="Liberation Sans" font-size="9.9" fill="#c7c8d0" text-anchor="middle" font-weight="normal" textLength="23.2" lengthAdjust="spacingAndGlyphs" stroke="#c7c8d0" stroke-width="0.25">10:54</text>
<text x="247.16" y="1066" font-family="Liberation Sans" font-size="9.9" fill="#c7c8d0" text-anchor="middle" font-weight="normal" textLength="23.2" lengthAdjust="spacingAndGlyphs" stroke="#c7c8d0" stroke-width="0.25">10:56</text>
<text x="340.49" y="1066" font-family="Liberation Sans" font-size="9.9" fill="#c7c8d0" text-anchor="middle" font-weight="normal" textLength="23.2" lengthAdjust="spacingAndGlyphs" stroke="#c7c8d0" stroke-width="0.25">10:58</text>
<text x="433.82" y="1066" font-family="Liberation Sans" font-size="9.9" fill="#c7c8d0" text-anchor="middle" font-weight="normal" textLength="23.2" lengthAdjust="spacingAndGlyphs" stroke="#c7c8d0" stroke-width="0.25">11:00</text>
<text x="527.15" y="1066" font-family="Liberation Sans" font-size="9.9" fill="#c7c8d0" text-anchor="middle" font-weight="normal" textLength="23.2" lengthAdjust="spacingAndGlyphs" stroke="#c7c8d0" stroke-width="0.25">11:02</text>
<text x="620.48" y="1066" font-family="Liberation Sans" font-size="9.9" fill="#c7c8d0" text-anchor="middle" font-weight="normal" textLength="23.2" lengthAdjust="spacingAndGlyphs" stroke="#c7c8d0" stroke-width="0.25">11:04</text>
<text x="713.81" y="1066" font-family="Liberation Sans" font-size="9.9" fill="#c7c8d0" text-anchor="middle" font-weight="normal" textLength="23.2" lengthAdjust="spacingAndGlyphs" stroke="#c7c8d0" stroke-width="0.25">11:06</text>
<text x="807.14" y="1066" font-family="Liberation Sans" font-size="9.9" fill="#c7c8d0" text-anchor="middle" font-weight="normal" textLength="23.2" lengthAdjust="spacingAndGlyphs" stroke="#c7c8d0" stroke-width="0.25">11:08</text>
<text x="900.47" y="1066" font-family="Liberation Sans" font-size="9.9" fill="#c7c8d0" text-anchor="middle" font-weight="normal" textLength="23.2" lengthAdjust="spacingAndGlyphs" stroke="#c7c8d0" stroke-width="0.25">11:10</text>
<text x="993.8" y="1066" font-family="Liberation Sans" font-size="9.9" fill="#c7c8d0" text-anchor="middle" font-weight="normal" textLength="23.2" lengthAdjust="spacingAndGlyphs" stroke="#c7c8d0" stroke-width="0.25">11:12</text>
<polygon points="32.6,1017.4 1040.4,1011 1040.4,1052.4 32.6,1052.4" fill="#38573e" fill-opacity="1"/>
<line x1="32.6" y1="934.3" x2="1042.8" y2="934.3" stroke="rgba(240,250,255,0.085)" stroke-width="1"/>
<line x1="32.6" y1="963.82" x2="1042.8" y2="963.82" stroke="rgba(240,250,255,0.085)" stroke-width="1"/>
<line x1="32.6" y1="993.35" x2="1042.8" y2="993.35" stroke="rgba(240,250,255,0.085)" stroke-width="1"/>
<line x1="32.6" y1="1022.88" x2="1042.8" y2="1022.88" stroke="rgba(240,250,255,0.085)" stroke-width="1"/>
<line x1="32.6" y1="1052.4" x2="1042.8" y2="1052.4" stroke="rgba(240,250,255,0.085)" stroke-width="1"/>
<line x1="60.5" y1="934.3" x2="60.5" y2="1052.4" stroke="rgba(240,250,255,0.085)" stroke-width="1"/>
<line x1="153.83" y1="934.3" x2="153.83" y2="1052.4" stroke="rgba(240,250,255,0.085)" stroke-width="1"/>
<line x1="247.16" y1="934.3" x2="247.16" y2="1052.4" stroke="rgba(240,250,255,0.085)" stroke-width="1"/>
<line x1="340.49" y1="934.3" x2="340.49" y2="1052.4" stroke="rgba(240,250,255,0.085)" stroke-width="1"/>
<line x1="433.82" y1="934.3" x2="433.82" y2="1052.4" stroke="rgba(240,250,255,0.085)" stroke-width="1"/>
<line x1="527.15" y1="934.3" x2="527.15" y2="1052.4" stroke="rgba(240,250,255,0.085)" stroke-width="1"/>
<line x1="620.48" y1="934.3" x2="620.48" y2="1052.4" stroke="rgba(240,250,255,0.085)" stroke-width="1"/>
<line x1="713.81" y1="934.3" x2="713.81" y2="1052.4" stroke="rgba(240,250,255,0.085)" stroke-width="1"/>
<line x1="807.14" y1="934.3" x2="807.14" y2="1052.4" stroke="rgba(240,250,255,0.085)" stroke-width="1"/>
<line x1="900.47" y1="934.3" x2="900.47" y2="1052.4" stroke="rgba(240,250,255,0.085)" stroke-width="1"/>
<line x1="993.8" y1="934.3" x2="993.8" y2="1052.4" stroke="rgba(240,250,255,0.085)" stroke-width="1"/>
<polyline points="32.6,1017.4 1040.4,1011" fill="none" stroke="#5f9e55" stroke-width="1.2" stroke-linejoin="round"/>
<polyline points="32.6,1052.4 1040.4,1052.4" fill="none" stroke="#d4913c" stroke-width="1.3" stroke-linejoin="round"/>
<rect x="13.6" y="1079.6" width="11.2" height="3.6" rx="0.5" fill="#73bf69"/>
<text x="30.7" y="1084.1" font-family="Liberation Sans" font-size="9.9" fill="#c7c8d0" text-anchor="start" font-weight="normal" stroke="#c7c8d0" stroke-width="0.25">/</text>
<rect x="42.6" y="1079.6" width="10.7" height="3.6" rx="0.5" fill="#f4b931"/>
<text x="59.1" y="1084.1" font-family="Liberation Sans" font-size="9.9" fill="#c7c8d0" text-anchor="start" font-weight="normal" textLength="18.1" lengthAdjust="spacingAndGlyphs" stroke="#c7c8d0" stroke-width="0.25">/run</text>
<rect x="85" y="1079.6" width="10.4" height="3.6" rx="0.5" fill="#1fbad6"/>
<text x="101.2" y="1084.1" font-family="Liberation Sans" font-size="9.9" fill="#c7c8d0" text-anchor="start" font-weight="normal" textLength="65.7" lengthAdjust="spacingAndGlyphs" stroke="#c7c8d0" stroke-width="0.25">/run/user/1001</text>
<rect x="175.2" y="1079.6" width="10.7" height="3.6" rx="0.5" fill="#ff7a2e"/>
<text x="191.2" y="1084.1" font-family="Liberation Sans" font-size="9.9" fill="#c7c8d0" text-anchor="start" font-weight="normal" textLength="55.8" lengthAdjust="spacingAndGlyphs" stroke="#c7c8d0" stroke-width="0.25">/run/user/42</text></svg>
</body></html>
